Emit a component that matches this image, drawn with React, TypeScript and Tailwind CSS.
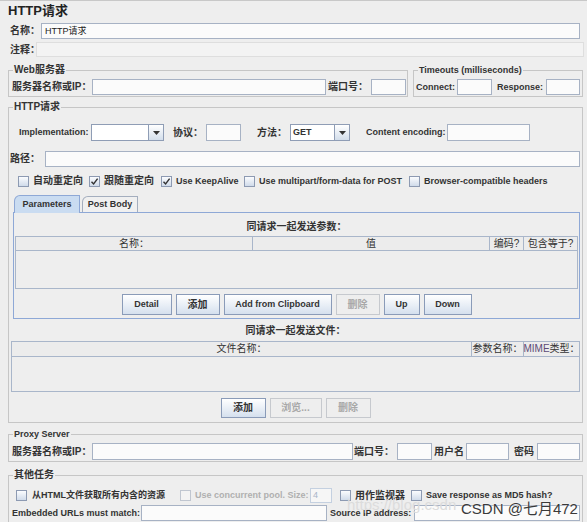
import React from 'react'

const cjk = 'text-[10px] font-bold text-[#333] leading-none whitespace-nowrap'
const lat = 'text-[9px] font-bold text-[#333] leading-none whitespace-nowrap'

function Box({ className = '', children }: { className?: string; children?: React.ReactNode }) {
  return (
    <div className={'h-full border border-[#a7b2c4] bg-[#fbfbfb] px-[3px] text-[9px] leading-[14px] ' + className}>
      {children}
    </div>
  )
}

function Combo({ className = '', value = '' }: { className?: string; value?: string }) {
  return (
    <div className={'flex h-[17px] border border-[#8f9db5] ' + className}>
      <div className="flex-1 bg-white px-[2px] text-[9px] font-bold leading-[15px] text-[#333]">{value}</div>
      <div className="flex w-[15px] items-center justify-center border-l border-[#8f9db5] bg-gradient-to-b from-white to-[#d3deeb]">
        <svg width="7" height="4" viewBox="0 0 7 4">
          <path d="M0 0H7L3.5 4Z" fill="#333" />
        </svg>
      </div>
    </div>
  )
}

function Check({ checked = false, disabled = false }: { checked?: boolean; disabled?: boolean }) {
  return (
    <span
      className={
        'flex h-[11px] w-[11px] shrink-0 items-center justify-center border ' +
        (disabled
          ? 'border-[#c0c6d0] bg-[#f3f3f3]'
          : 'border-[#8d9ab2] bg-gradient-to-b from-[#fbfcfe] to-[#d0dbea]')
      }
    >
      {checked && (
        <svg width="9" height="9" viewBox="0 0 9 9">
          <path d="M1.5 4.8L3.6 7L7.6 1.6" stroke="#333" strokeWidth="1.4" fill="none" />
        </svg>
      )}
    </span>
  )
}

function Btn({
  className = '',
  children,
  disabled = false,
}: {
  className?: string
  children: React.ReactNode
  disabled?: boolean
}) {
  return (
    <div
      className={
        'flex h-full items-center justify-center border font-bold leading-none whitespace-nowrap ' +
        (disabled
          ? 'border-[#c6c9ce] bg-[#eeeeee] text-[#a8a8a8] '
          : 'border-[#8a9bb8] bg-gradient-to-b from-white to-[#d5e0ee] text-[#333] ') +
        className
      }
    >
      {children}
    </div>
  )
}

// legend is a fixed 12px block so the fieldset border sits 6px below the top
function Legend({ children, latin = false }: { children: React.ReactNode; latin?: boolean }) {
  return (
    <legend className="ml-[4px] px-[1px]">
      <span
        className={
          'block h-[12px] font-bold leading-[12px] whitespace-nowrap text-[#333] ' +
          (latin ? 'text-[9px]' : 'text-[10px]')
        }
      >
        {children}
      </span>
    </legend>
  )
}

function HeadCell({ className = '', children }: { className?: string; children?: React.ReactNode }) {
  return (
    <div
      className={
        'flex items-center justify-center border-r border-[#a9b6ca] text-[10px] leading-none text-[#333] whitespace-nowrap ' +
        className
      }
    >
      {children}
    </div>
  )
}

export default function App() {
  return (
    <div className="relative h-[522px] w-[587px] overflow-hidden border-t border-[#c8c8c8] bg-[#eeeeee] font-['Liberation_Sans','Noto_Sans_CJK_SC',sans-serif]">
      <div className="h-[19px] pl-[8px] text-[13px] font-bold leading-[19px] text-[#222]">HTTP请求</div>

      <div className="mt-[3px] flex h-[16px] items-center pl-[10px] pr-[7px]">
        <span className={cjk + ' w-[31px]'}>名称：</span>
        <Box className="flex-1 text-[#222]">HTTP请求</Box>
      </div>
      <div className="mt-[3px] flex h-[15px] items-center pl-[10px] pr-[3px]">
        <span className={cjk + ' w-[26px]'}>注释：</span>
        <div className="h-full flex-1 border border-[#dedede] bg-[#f3f3f3]" />
      </div>

      <div className="mt-[7px] flex gap-[5px] pl-[8px]">
        <fieldset className="w-[400px] border border-[#c6c6c6]">
          <Legend>Web服务器</Legend>
          <div className="mb-[1px] mt-[3px] flex h-[16px] items-center pl-[3px] pr-[1px]">
            <span className={cjk + ' w-[80px]'}>服务器名称或IP：</span>
            <Box className="flex-1" />
            <span className={cjk + ' w-[45px] pl-[2px]'}>端口号：</span>
            <Box className="w-[35px]" />
          </div>
        </fieldset>
        <fieldset className="w-[170px] border border-[#c6c6c6]">
          <Legend latin>Timeouts (milliseconds)</Legend>
          <div className="mb-[1px] mt-[3px] flex h-[16px] items-center pl-[2px] pr-[2px]">
            <span className={lat + ' w-[41px]'}>Connect:</span>
            <Box className="w-[35px]" />
            <span className={lat + ' w-[54px] pl-[5px]'}>Response:</span>
            <Box className="w-[34px]" />
          </div>
        </fieldset>
      </div>

      <fieldset className="ml-[8px] mr-[4px] mt-[4px] border border-[#c6c6c6] pb-[4px]">
        <Legend>HTTP请求</Legend>
        <div className="mt-[11px] flex h-[17px] items-center pl-[10px]">
          <span className={lat + ' w-[72px]'}>Implementation:</span>
          <Combo className="w-[73px]" />
          <span className={cjk + ' w-[42px] pl-[9px]'}>协议：</span>
          <Box className="w-[35px]" />
          <span className={cjk + ' w-[49px] pl-[16px]'}>方法：</span>
          <Combo className="w-[60px]" value="GET" />
          <span className={lat + ' w-[97px] pl-[16px]'}>Content encoding:</span>
          <Box className="w-[83px]" />
        </div>

        <div className="mt-[10px] flex h-[16px] items-center pl-[1px] pr-[2px]">
          <span className={cjk + ' w-[35px]'}>路径：</span>
          <Box className="flex-1" />
        </div>

        <div className="mt-[7px] flex h-[14px] items-center pl-[9px]">
          <div className="flex w-[71px] shrink-0 items-center gap-[4px]">
            <Check />
            <span className={cjk}>自动重定向</span>
          </div>
          <div className="flex w-[72px] shrink-0 items-center gap-[4px]">
            <Check checked />
            <span className={cjk}>跟随重定向</span>
          </div>
          <div className="flex w-[83px] shrink-0 items-center gap-[4px]">
            <Check checked />
            <span className={lat}>Use KeepAlive</span>
          </div>
          <div className="flex w-[165px] shrink-0 items-center gap-[4px]">
            <Check />
            <span className={lat}>Use multipart/form-data for POST</span>
          </div>
          <div className="flex items-center gap-[4px]">
            <Check />
            <span className={lat}>Browser-compatible headers</span>
          </div>
        </div>

        <div className="ml-[4px] mr-[2px] mt-[7px]">
          <div className="flex h-[17px] items-end gap-[2px] pl-[1px]">
            <div className={lat + ' relative z-10 -mb-px flex h-[18px] w-[66px] items-center justify-center rounded-tl-[6px] border border-b-0 border-[#8ea8d6] bg-[#cadcf1]'}>
              Parameters
            </div>
            <div className={lat + ' flex h-[16px] w-[56px] items-center justify-center rounded-tl-[6px] border border-b-0 border-[#a4aebe] bg-[#f0f0f0]'}>
              Post Body
            </div>
          </div>
          <div className="h-[107px] border border-[#8ea8d6] bg-[#eeeeee] px-[1px]">
            <div className={cjk + ' mt-[9px] h-[12px] text-center leading-[12px]'}>同请求一起发送参数：</div>
            <div className="mt-[2px] h-[53px] border border-[#a9b6ca]">
              <div className="flex h-[14px] border-b border-[#a9b6ca] bg-[#ececec]">
                <HeadCell className="flex-1">名称：</HeadCell>
                <HeadCell className="flex-1">值</HeadCell>
                <HeadCell className="w-[34px]">编码?</HeadCell>
                <HeadCell className="w-[53px] border-r-0">包含等于?</HeadCell>
              </div>
            </div>
            <div className="mt-[5px] flex h-[21px] justify-center gap-[4px]">
              <Btn className="w-[50px] text-[9px]">Detail</Btn>
              <Btn className="w-[44px] text-[10px]">添加</Btn>
              <Btn className="w-[108px] text-[9px]">Add from Clipboard</Btn>
              <Btn className="w-[44px] text-[10px]" disabled>删除</Btn>
              <Btn className="w-[36px] text-[9px]">Up</Btn>
              <Btn className="w-[48px] text-[9px]">Down</Btn>
            </div>
          </div>
        </div>

        <div className={cjk + ' mt-[7px] h-[12px] text-center leading-[12px]'}>同请求一起发送文件：</div>
        <div className="ml-[2px] mr-[2px] mt-[3px] h-[51px] border border-[#a9b6ca]">
          <div className="flex h-[15px] border-b border-[#a9b6ca] bg-[#ececec]">
            <HeadCell className="flex-1">文件名称：</HeadCell>
            <HeadCell className="w-[52px]">参数名称：</HeadCell>
            <HeadCell className="w-[55px] border-r-0">
              <span className="text-[#5d4a75]">MIME</span>类型：
            </HeadCell>
          </div>
        </div>
        <div className="mt-[6px] flex h-[20px] justify-center gap-[4px]">
          <Btn className="w-[45px] text-[10px]">添加</Btn>
          <Btn className="w-[52px] text-[10px]" disabled>浏览...</Btn>
          <Btn className="w-[45px] text-[10px]" disabled>删除</Btn>
        </div>
      </fieldset>

      <fieldset className="ml-[8px] mr-[4px] mt-[5px] border border-[#c6c6c6] pb-[1px]">
        <Legend latin>Proxy Server</Legend>
        <div className="mt-[3px] flex h-[17px] items-center pl-[3px] pr-[2px]">
          <span className={cjk + ' w-[80px]'}>服务器名称或IP：</span>
          <Box className="flex-1" />
          <span className={cjk + ' w-[44px] pl-[1px]'}>端口号：</span>
          <Box className="w-[35px]" />
          <span className={cjk + ' w-[34px] pl-[2px]'}>用户名</span>
          <Box className="w-[43px]" />
          <span className={cjk + ' w-[28px] pl-[5px]'}>密码</span>
          <Box className="w-[43px]" />
        </div>
      </fieldset>

      <fieldset className="ml-[8px] mr-[4px] mt-[7px] border border-[#c6c6c6] pb-[4px]">
        <Legend>其他任务</Legend>
        <div className="mt-[7px] flex h-[15px] items-center pl-[7px]">
          <div className="flex w-[164px] shrink-0 items-center gap-[5px]">
            <Check />
            <span className="text-[9px] font-bold leading-none whitespace-nowrap text-[#333]">
              从HTML文件获取所有内含的资源
            </span>
          </div>
          <div className="flex h-full w-[160px] shrink-0 items-center gap-[4px]">
            <Check disabled />
            <span className="w-[111px] text-[9px] font-bold leading-none whitespace-nowrap text-[#b0b0b0]">
              Use concurrent pool. Size:
            </span>
            <div className="h-full w-[22px] border border-[#c4d0e0] bg-[#f6f6f6] px-[2px] text-[9px] leading-[13px] text-[#a8b4c8]">
              4
            </div>
          </div>
          <div className="flex w-[71px] shrink-0 items-center gap-[4px]">
            <Check />
            <span className={cjk}>用作监视器</span>
          </div>
          <div className="flex items-center gap-[4px]">
            <Check />
            <span className={lat}>Save response as MD5 hash?</span>
          </div>
        </div>
        <div className="mt-[2px] flex h-[16px] items-center pl-[3px] pr-[2px]">
          <span className={lat + ' w-[129px]'}>Embedded URLs must match:</span>
          <Box className="w-[186px]" />
          <span className={lat + ' w-[87px] pl-[3px]'}>Source IP address:</span>
          <Box className="flex-1" />
        </div>
      </fieldset>

      <div className="pointer-events-none absolute left-[347px] top-[496px] text-[15px] leading-none whitespace-nowrap text-[#dcdcdc]">
        https://blog.csdn
      </div>
      <div className="pointer-events-none absolute left-[461px] top-[500px] text-[15px] leading-none whitespace-nowrap text-[#3a3a3a] [text-shadow:0_0_2px_#ffffff]">
        CSDN @七月472
      </div>
    </div>
  )
}
